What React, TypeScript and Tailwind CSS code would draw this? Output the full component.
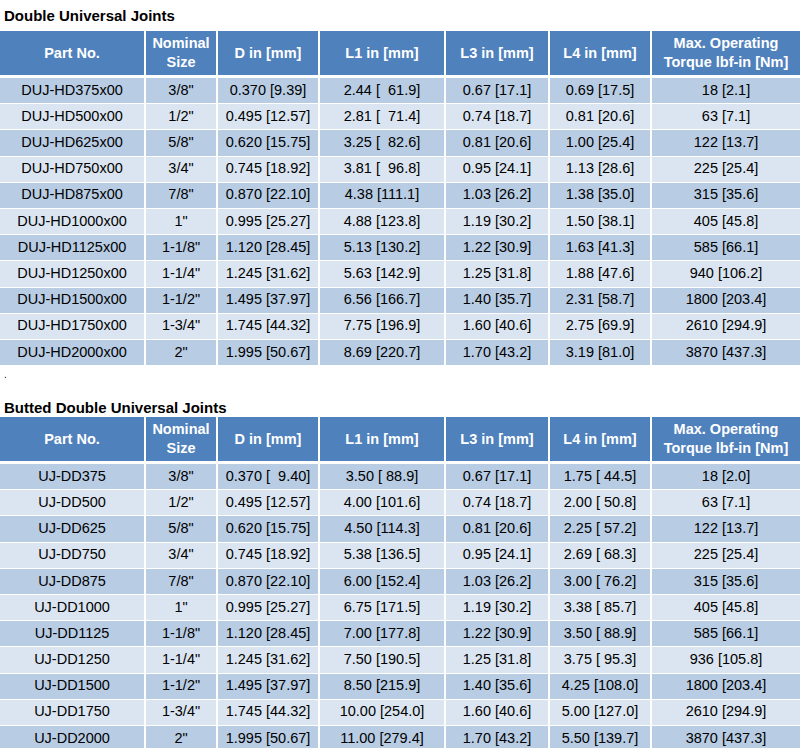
import React from "react";

const t1 = [
["DUJ-HD375x00","3/8\"","0.370 [9.39]","2.44 [  61.9]","0.67 [17.1]","0.69 [17.5]","18 [2.1]"],
["DUJ-HD500x00","1/2\"","0.495 [12.57]","2.81 [  71.4]","0.74 [18.7]","0.81 [20.6]","63 [7.1]"],
["DUJ-HD625x00","5/8\"","0.620 [15.75]","3.25 [  82.6]","0.81 [20.6]","1.00 [25.4]","122 [13.7]"],
["DUJ-HD750x00","3/4\"","0.745 [18.92]","3.81 [  96.8]","0.95 [24.1]","1.13 [28.6]","225 [25.4]"],
["DUJ-HD875x00","7/8\"","0.870 [22.10]","4.38 [111.1]","1.03 [26.2]","1.38 [35.0]","315 [35.6]"],
["DUJ-HD1000x00","1\"","0.995 [25.27]","4.88 [123.8]","1.19 [30.2]","1.50 [38.1]","405 [45.8]"],
["DUJ-HD1125x00","1-1/8\"","1.120 [28.45]","5.13 [130.2]","1.22 [30.9]","1.63 [41.3]","585 [66.1]"],
["DUJ-HD1250x00","1-1/4\"","1.245 [31.62]","5.63 [142.9]","1.25 [31.8]","1.88 [47.6]","940 [106.2]"],
["DUJ-HD1500x00","1-1/2\"","1.495 [37.97]","6.56 [166.7]","1.40 [35.7]","2.31 [58.7]","1800 [203.4]"],
["DUJ-HD1750x00","1-3/4\"","1.745 [44.32]","7.75 [196.9]","1.60 [40.6]","2.75 [69.9]","2610 [294.9]"],
["DUJ-HD2000x00","2\"","1.995 [50.67]","8.69 [220.7]","1.70 [43.2]","3.19 [81.0]","3870 [437.3]"],
];
const t2 = [
["UJ-DD375","3/8\"","0.370 [  9.40]","3.50 [ 88.9]","0.67 [17.1]","1.75 [ 44.5]","18 [2.0]"],
["UJ-DD500","1/2\"","0.495 [12.57]","4.00 [101.6]","0.74 [18.7]","2.00 [ 50.8]","63 [7.1]"],
["UJ-DD625","5/8\"","0.620 [15.75]","4.50 [114.3]","0.81 [20.6]","2.25 [ 57.2]","122 [13.7]"],
["UJ-DD750","3/4\"","0.745 [18.92]","5.38 [136.5]","0.95 [24.1]","2.69 [ 68.3]","225 [25.4]"],
["UJ-DD875","7/8\"","0.870 [22.10]","6.00 [152.4]","1.03 [26.2]","3.00 [ 76.2]","315 [35.6]"],
["UJ-DD1000","1\"","0.995 [25.27]","6.75 [171.5]","1.19 [30.2]","3.38 [ 85.7]","405 [45.8]"],
["UJ-DD1125","1-1/8\"","1.120 [28.45]","7.00 [177.8]","1.22 [30.9]","3.50 [ 88.9]","585 [66.1]"],
["UJ-DD1250","1-1/4\"","1.245 [31.62]","7.50 [190.5]","1.25 [31.8]","3.75 [ 95.3]","936 [105.8]"],
["UJ-DD1500","1-1/2\"","1.495 [37.97]","8.50 [215.9]","1.40 [35.6]","4.25 [108.0]","1800 [203.4]"],
["UJ-DD1750","1-3/4\"","1.745 [44.32]","10.00 [254.0]","1.60 [40.6]","5.00 [127.0]","2610 [294.9]"],
["UJ-DD2000","2\"","1.995 [50.67]","11.00 [279.4]","1.70 [43.2]","5.50 [139.7]","3870 [437.3]"],
];
const heads: React.ReactNode[] = ["Part No.", <>Nominal<br/>Size</>, "D in [mm]", "L1 in [mm]", "L3 in [mm]", "L4 in [mm]", <>Max. Operating<br/>Torque lbf-in [Nm]</>];

function Table({ rows }: { rows: string[][] }) {
  return (
    <div className="grid grid-cols-[144px_70px_100px_124px_102px_100px_148px] gap-x-[2px] gap-y-[1px] bg-white">
      {heads.map((h, i) => (
        <div key={i} className="bg-[#4f81bd] text-white font-bold text-[14.5px] leading-[19px] h-[44px] flex items-center justify-center text-center">{h}</div>
      ))}
      <div className="col-span-7 h-[1px] bg-white"></div>
      {rows.map((r, ri) =>
        r.map((c, ci) => (
          <div key={ri + "-" + ci} className={`${ri % 2 === 0 ? "bg-[#b8cce4]" : "bg-[#dbe5f1]"} h-[25.2px] flex items-center justify-center text-[14.5px] text-black whitespace-pre`}>{c}</div>
        ))
      )}
    </div>
  );
}

export default function App() {
  return (
    <div className="w-[800px] h-[748px] bg-white overflow-hidden" style={{ fontFamily: '"Liberation Sans", Arial, sans-serif' }}>
      <div className="h-[31px] pl-[4px] pt-[5px] font-bold text-[15px] text-black">Double Universal Joints</div>
      <Table rows={t1} />
      <div className="h-[37px] pl-[4px] text-[10px] leading-[20px]">.</div>
      <div className="h-[15px] pl-[4px] font-bold text-[15px] leading-[12px] text-black -mt-[0px]">Butted Double Universal Joints</div>
      <Table rows={t2} />
    </div>
  );
}
